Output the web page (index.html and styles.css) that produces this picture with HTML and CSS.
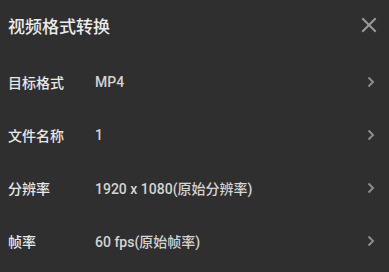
FILE: index.html
```html
<!DOCTYPE html>
<html lang="zh-CN">
<head>
<meta charset="utf-8">
<title>视频格式转换</title>
<link rel="stylesheet" href="styles.css">
</head>
<body>
<div class="panel">
  <header class="header">
    <h1 class="title">视频格式转换</h1>
    <svg class="close" width="16" height="16" viewBox="0 0 16 16"><path d="M2 2 L14 14 M14 2 L2 14" stroke="#9a9a9a" stroke-width="2" stroke-linecap="square" fill="none"/></svg>
  </header>
  <div class="row">
    <span class="label">目标格式</span>
    <span class="value">MP4</span>
    <svg class="chev" width="10" height="12" viewBox="0 0 10 12"><path d="M2.5 1.5 L7 6 L2.5 10.5" stroke="#8c8c8c" stroke-width="2" fill="none"/></svg>
  </div>
  <div class="row">
    <span class="label">文件名称</span>
    <span class="value">1</span>
    <svg class="chev" width="10" height="12" viewBox="0 0 10 12"><path d="M2.5 1.5 L7 6 L2.5 10.5" stroke="#8c8c8c" stroke-width="2" fill="none"/></svg>
  </div>
  <div class="row">
    <span class="label">分辨率</span>
    <span class="value">1920 x 1080(原始分辨率)</span>
    <svg class="chev" width="10" height="12" viewBox="0 0 10 12"><path d="M2.5 1.5 L7 6 L2.5 10.5" stroke="#8c8c8c" stroke-width="2" fill="none"/></svg>
  </div>
  <div class="row">
    <span class="label">帧率</span>
    <span class="value">60 fps(原始帧率)</span>
    <svg class="chev" width="10" height="12" viewBox="0 0 10 12"><path d="M2.5 1.5 L7 6 L2.5 10.5" stroke="#8c8c8c" stroke-width="2" fill="none"/></svg>
  </div>
</div>
</body>
</html>
```
FILE: styles.css
```css
html, body {
  margin: 0;
  padding: 0;
  background: #2f2f2f;
}
body {
  width: 389px;
  height: 272px;
  overflow: hidden;
  font-family: Roboto, "Noto Sans CJK SC", sans-serif;
  color: #e6e6e6;
}
.panel {
  display: flex;
  flex-direction: column;
}
.header {
  height: 55px;
  display: flex;
  align-items: center;
  justify-content: space-between;
  padding: 0 12px 0 8px;
}
.title {
  margin: 0;
  font-size: 17px;
  font-weight: 500;
  color: #ececec;
  line-height: 1;
  padding-bottom: 1px;
}
.close {
  display: block;
  margin-bottom: 5px;
}
.row {
  height: 53px;
  display: flex;
  align-items: center;
  padding: 0 13px 0 8px;
}
.label {
  width: 87px;
  font-size: 14px;
  font-weight: 500;
  color: #e8e8e8;
}
.value {
  flex: 1;
  font-size: 14px;
  font-weight: 500;
  color: #d4d4d4;
}
.chev {
  display: block;
}
```
